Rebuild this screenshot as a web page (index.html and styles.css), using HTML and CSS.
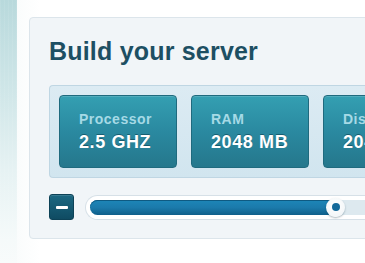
FILE: index.html
```html
<!DOCTYPE html>
<html>
<head>
<meta charset="utf-8">
<link rel="stylesheet" href="styles.css">
</head>
<body>
<div class="side"></div>
<main class="main">
  <section class="card">
    <h1 class="title">Build your server</h1>
    <div class="panel">
      <div class="opt">
        <div class="label">Processor</div>
        <div class="value">2.5 GHZ</div>
      </div>
      <div class="opt">
        <div class="label">RAM</div>
        <div class="value">2048 MB</div>
      </div>
      <div class="opt">
        <div class="label">Disk</div>
        <div class="value">2048 GB</div>
      </div>
    </div>
    <div class="controls">
      <button class="minus" aria-label="decrease"><span class="dash"></span></button>
      <div class="slider">
        <div class="track">
          <div class="fill" style="width:245px"></div>
          <div class="handle"><span class="dot"></span></div>
        </div>
      </div>
    </div>
  </section>
</main>
</body>
</html>
```
FILE: styles.css
```css
html, body {
  margin: 0;
  padding: 0;
  height: 100%;
}
body {
  display: flex;
  overflow: hidden;
  background: linear-gradient(90deg, #f6fafa 0, #ffffff 40px);
  font-family: "Liberation Sans", Arial, sans-serif;
}
.side {
  flex: 0 0 17px;
  background:
    repeating-linear-gradient(90deg, rgba(255,255,255,0.08) 0 1px, transparent 1px 4px),
    linear-gradient(180deg, #b8d9dc 0, #cfe6e8 90px, #e6f2f3 170px, #f5fafa 240px, #f8fbfb 263px);
}
.main {
  flex: 1;
  padding: 17px 0 0 12px;
  min-width: 0;
}
.card {
  box-sizing: border-box;
  width: 420px;
  height: 222px;
  background: #f1f5f8;
  border: 1px solid #dce5eb;
  border-radius: 4px;
  padding: 18px 0 0 19px;
}
.title {
  margin: 0;
  font-size: 25px;
  line-height: 30px;
  font-weight: bold;
  letter-spacing: 0.2px;
  color: #1d4f63;
}
.panel {
  margin-top: 19px;
  display: flex;
  gap: 14px;
  box-sizing: border-box;
  height: 93px;
  padding: 9px;
  background: linear-gradient(180deg, #dcebf3, #d1e5ef);
  border: 1px solid #bfd6e3;
  border-right: 0;
  border-radius: 4px 0 0 4px;
}
.opt {
  flex: 0 0 118px;
  box-sizing: border-box;
  height: 73px;
  padding: 15px 0 0 19px;
  background: linear-gradient(180deg, #349fb2 0, #2a89a0 50%, #25778c 100%);
  border: 1px solid #1f6a7e;
  border-radius: 4px;
  box-shadow: inset 0 1px 0 rgba(255,255,255,0.15);
}
.label {
  font-size: 14px;
  line-height: 16px;
  font-weight: bold;
  letter-spacing: 0.5px;
  color: #a6dae6;
}
.value {
  margin-top: 5px;
  font-size: 18px;
  line-height: 20px;
  font-weight: bold;
  letter-spacing: 0.6px;
  color: #ffffff;
  text-shadow: 0 -1px 0 rgba(0,40,55,0.45);
}
.controls {
  margin-top: 16px;
  display: flex;
  align-items: center;
  gap: 11px;
}
.minus {
  box-sizing: border-box;
  width: 25px;
  height: 26px;
  padding: 0;
  display: flex;
  align-items: center;
  justify-content: center;
  background: linear-gradient(180deg, #1c6882, #0f4b62);
  border: 1px solid #0d4257;
  border-radius: 3px;
  box-shadow: inset 0 1px 0 rgba(255,255,255,0.12);
}
.dash {
  width: 12px;
  height: 3px;
  background: #ffffff;
  border-radius: 1px;
}
.slider {
  box-sizing: border-box;
  flex: 1;
  height: 25px;
  padding: 4px;
  background: #ffffff;
  border: 1px solid #d6e0e7;
  border-right: 0;
  border-radius: 13px 0 0 13px;
}
.track {
  position: relative;
  height: 15px;
  background: #dde9ef;
  border-radius: 8px 0 0 8px;
}
.fill {
  height: 100%;
  background: linear-gradient(180deg, #1d86b8 0, #1b7aab 50%, #0f5f8a 100%);
  border-radius: 8px 0 0 8px;
  box-shadow: inset 0 1px 0 #0e5a82;
}
.handle {
  position: absolute;
  left: 236px;
  top: -2px;
  box-sizing: border-box;
  width: 19px;
  height: 19px;
  border-radius: 50%;
  background: radial-gradient(circle at 50% 40%, #ffffff, #eef3f6);
  box-shadow: 0 1px 2px rgba(0,40,60,0.35);
  display: flex;
  align-items: center;
  justify-content: center;
}
.dot {
  width: 8px;
  height: 8px;
  border-radius: 50%;
  background: #13699a;
}
```
